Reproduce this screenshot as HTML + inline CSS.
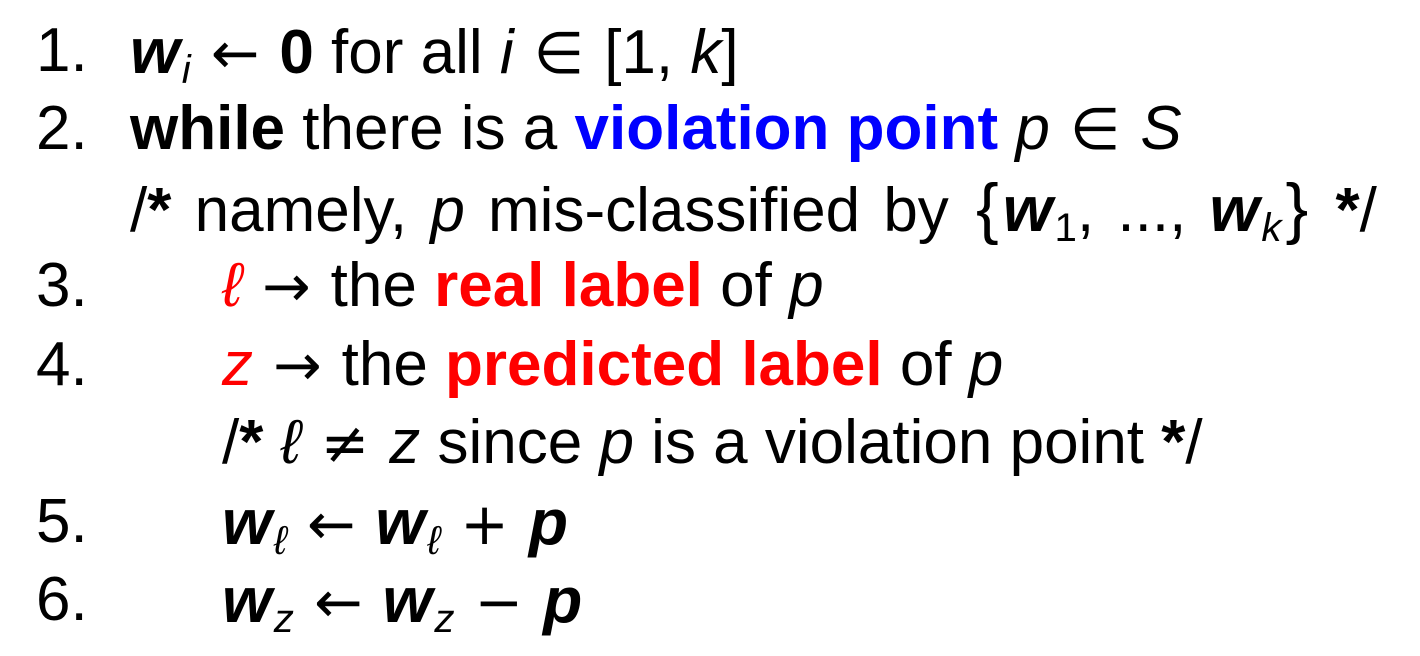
<!DOCTYPE html>
<html><head><meta charset="utf-8"><style>
html,body{margin:0;padding:0;background:#fff;width:1420px;height:656px;overflow:hidden}
.l{position:absolute;left:0;width:1420px;height:78px;line-height:78px;font-family:"Liberation Sans","DejaVu Sans",sans-serif;font-size:62px;color:#000;white-space:nowrap}
.n{position:absolute;left:36px}
.t1{position:absolute;left:130px}
.t2{position:absolute;left:222px}
i{font-style:italic}
.b{font-weight:bold}
.bi{font-weight:bold;font-style:italic;font-size:64px}
.blue{color:#0000ff;font-weight:bold}
.red{color:#ff0000}
.rb{color:#ff0000;font-weight:bold}
.s{display:inline-block;font-family:"DejaVu Sans",sans-serif;font-size:58px;margin:0 20px}
.br{display:inline-block;font-size:68px;margin:0 4px}
sub{font-size:0.65em;vertical-align:-0.25em;line-height:0;margin-left:2px}
</style></head><body>
<div class="l" style="top:12px"><span class="n">1.</span><span class="t1"><span class="bi">w</span><sub><i>i</i></sub><span class="s">←</span><span class="b">0</span> for all <i>i</i><span class="s">∈</span>[1, <i>k</i>]</span></div>
<div class="l" style="top:90px"><span class="n">2.</span><span class="t1"><span class="b">while</span> there is a <span class="blue">violation point</span> <i>p</i><span class="s">∈</span><i>S</i></span></div>
<div class="l" style="top:169px;word-spacing:6px"><span class="t1">/<span class="b">*</span> namely, <i>p</i> mis-classified by <span class="br">{</span><span class="bi">w</span><sub>1</sub>, ..., <span class="bi">w</span><sub><i>k</i></sub><span class="br">}</span> <span class="b">*</span>/</span></div>
<div class="l" style="top:247px"><span class="n">3.</span><span class="t2"><i class="red">ℓ</i><span class="s">→</span>the <span class="rb">real label</span> of <i>p</i></span></div>
<div class="l" style="top:326px"><span class="n">4.</span><span class="t2"><i class="red">z</i><span class="s">→</span>the <span class="rb">predicted label</span> of <i>p</i></span></div>
<div class="l" style="top:404px"><span class="t2">/<span class="b">*</span> <i>ℓ</i><span class="s">≠</span><i>z</i> since <i>p</i> is a violation point <span class="b">*</span>/</span></div>
<div class="l" style="top:483px"><span class="n">5.</span><span class="t2"><span class="bi">w</span><sub><i>ℓ</i></sub><span class="s">←</span><span class="bi">w</span><sub><i>ℓ</i></sub><span class="s">+</span><span class="bi">p</span></span></div>
<div class="l" style="top:561px"><span class="n">6.</span><span class="t2"><span class="bi">w</span><sub><i>z</i></sub><span class="s">←</span><span class="bi">w</span><sub><i>z</i></sub><span class="s">−</span><span class="bi">p</span></span></div>
</body></html>
